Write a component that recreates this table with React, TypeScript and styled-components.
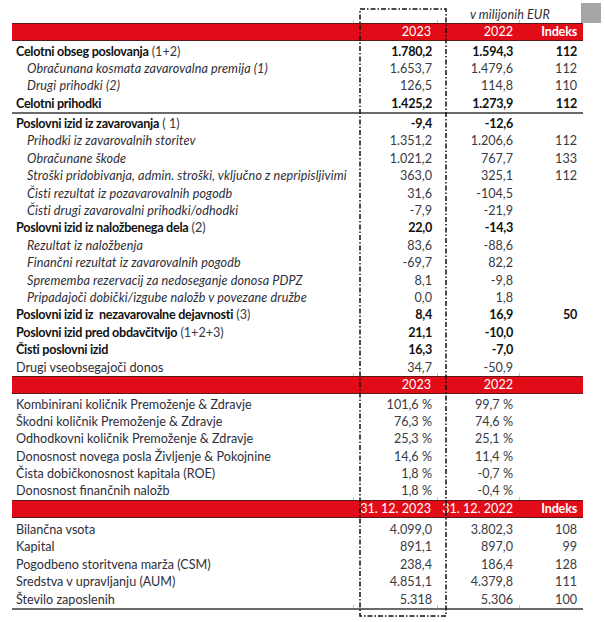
import React from "react";
import styled, { createGlobalStyle } from "styled-components";

const Global = createGlobalStyle`
  html, body { margin: 0; padding: 0; background: #ffffff; }
  body { font-family: Lato, "Noto Sans", sans-serif; }
`;

const RED = "#e20b18";
const COLS = "341px 84px 82px 64px";
const ROW_H = 17.4;

const Page = styled.div`
  position: relative;
  width: 605px;
  height: 622px;
  box-sizing: border-box;
  padding-left: 12px;
  overflow: hidden;
  font-size: 12.6px;
  color: #33333d;
`;

const Sheet = styled.div`
  width: 571px;
  display: flex;
  flex-direction: column;
`;

const UnitRow = styled.div`
  display: grid;
  grid-template-columns: ${COLS};
  height: 23px;
  box-sizing: border-box;
  padding-top: 6px;
  line-height: 17px;
`;

const UnitLabel = styled.div`
  grid-column: 3 / span 2;
  text-align: center;
  font-style: italic;
  letter-spacing: 0.1px;
  color: #2e2e38;
`;

const HeaderBar = styled.div`
  display: grid;
  grid-template-columns: ${COLS};
  height: 18px;
  box-sizing: border-box;
  background: ${RED};
  border-top: 1px solid #5a1a1a;
  border-bottom: 1px solid #5a1a1a;
  color: #ffffff;
  line-height: 16px;
`;

const HeadCell = styled.div<{ $bold?: boolean; $tick?: boolean }>`
  position: relative;
  text-align: right;
  padding-right: 6px;
  font-weight: ${(p) => (p.$bold ? 700 : 400)};
  letter-spacing: ${(p) => (p.$bold ? "-0.2px" : "0")};
  &::before {
    content: "";
    display: ${(p) => (p.$tick ? "block" : "none")};
    position: absolute;
    left: 0;
    top: -4px;
    width: 1px;
    height: 3px;
    background: #c4c4c4;
  }
`;

const Section = styled.div<{ $padTop: number; $padBottom?: number }>`
  display: flex;
  flex-direction: column;
  padding-top: ${(p) => p.$padTop}px;
  padding-bottom: ${(p) => p.$padBottom ?? 0}px;
`;

const Row = styled.div`
  display: grid;
  grid-template-columns: ${COLS};
  height: ${ROW_H}px;
  line-height: ${ROW_H}px;
  white-space: nowrap;
`;

const Rule = styled.div<{ $gapAfter?: number }>`
  height: 2px;
  background: #6a6a6a;
  margin-bottom: ${(p) => p.$gapAfter ?? 0}px;
`;

const BottomTicks = styled.div`
  display: grid;
  grid-template-columns: ${COLS};
  height: 0;
`;

const Tick = styled.div`
  position: relative;
  &::before {
    content: "";
    position: absolute;
    left: 0;
    top: -3px;
    width: 1px;
    height: 3px;
    background: #c4c4c4;
  }
`;

const Label = styled.div<{ $bold?: boolean; $italic?: boolean; $indent?: boolean }>`
  padding-left: ${(p) => (p.$indent ? 15 : 4)}px;
  font-weight: ${(p) => (p.$bold ? 700 : 400)};
  font-style: ${(p) => (p.$italic ? "italic" : "normal")};
  letter-spacing: ${(p) => (p.$bold ? "-0.28px" : p.$italic ? "0.11px" : "0")};
  color: ${(p) => (p.$bold ? "#111111" : "#2e2e38")};
`;

const Note = styled.span`
  font-weight: 400;
  letter-spacing: 0;
  color: #3a3a44;
`;

const Num = styled.div<{ $bold?: boolean; $pad?: number }>`
  text-align: right;
  padding-right: ${(p) => p.$pad ?? 6}px;
  font-weight: ${(p) => (p.$bold ? 700 : 400)};
  letter-spacing: ${(p) => (p.$bold ? "-0.25px" : "0")};
  color: ${(p) => (p.$bold ? "#111111" : "#3a3a44")};
`;

const Square = styled.div`
  position: absolute;
  left: 581px;
  top: 3px;
  width: 20px;
  height: 20px;
  background: #a6a6a6;
`;

const Frame = styled.svg`
  position: absolute;
  left: 359px;
  top: 8px;
  overflow: visible;
  pointer-events: none;
`;

type Line = {
  label: string;
  note?: string;
  bold?: boolean;
  italic?: boolean;
  indent?: boolean;
  a: string;
  b: string;
  i?: string;
};

const groupA: Line[] = [
  { label: "Celotni obseg poslovanja", note: " (1+2)", bold: true, a: "1.780,2", b: "1.594,3", i: "112" },
  { label: "Obračunana kosmata zavarovalna premija (1)", italic: true, indent: true, a: "1.653,7", b: "1.479,6", i: "112" },
  { label: "Drugi prihodki (2)", italic: true, indent: true, a: "126,5", b: "114,8", i: "110" },
  { label: "Celotni prihodki", bold: true, a: "1.425,2", b: "1.273,9", i: "112" },
];

const groupB: Line[] = [
  { label: "Poslovni izid iz zavarovanja", note: " ( 1)", bold: true, a: "-9,4", b: "-12,6" },
  { label: "Prihodki iz zavarovalnih storitev", italic: true, indent: true, a: "1.351,2", b: "1.206,6", i: "112" },
  { label: "Obračunane škode", italic: true, indent: true, a: "1.021,2", b: "767,7", i: "133" },
  { label: "Stroški pridobivanja, admin. stroški, vključno z nepripisljivimi", italic: true, indent: true, a: "363,0", b: "325,1", i: "112" },
  { label: "Čisti rezultat iz pozavarovalnih pogodb", italic: true, indent: true, a: "31,6", b: "-104,5" },
  { label: "Čisti drugi zavarovalni prihodki/odhodki", italic: true, indent: true, a: "-7,9", b: "-21,9" },
  { label: "Poslovni izid iz naložbenega dela", note: " (2)", bold: true, a: "22,0", b: "-14,3" },
  { label: "Rezultat iz naložbenja", italic: true, indent: true, a: "83,6", b: "-88,6" },
  { label: "Finančni rezultat iz zavarovalnih pogodb", italic: true, indent: true, a: "-69,7", b: "82,2" },
  { label: "Sprememba rezervacij za nedoseganje donosa PDPZ", italic: true, indent: true, a: "8,1", b: "-9,8" },
  { label: "Pripadajoči dobički/izgube naložb v povezane družbe", italic: true, indent: true, a: "0,0", b: "1,8" },
  { label: "Poslovni izid iz \u00a0nezavarovalne dejavnosti", note: " (3)", bold: true, a: "8,4", b: "16,9", i: "50" },
  { label: "Poslovni izid pred obdavčitvijo", note: " (1+2+3)", bold: true, a: "21,1", b: "-10,0" },
  { label: "Čisti poslovni izid", bold: true, a: "16,3", b: "-7,0" },
  { label: "Drugi vseobsegajoči donos", a: "34,7", b: "-50,9" },
];

const ratios: Line[] = [
  { label: "Kombinirani količnik Premoženje & Zdravje", a: "101,6 %", b: "99,7 %" },
  { label: "Škodni količnik Premoženje & Zdravje", a: "76,3 %", b: "74,6 %" },
  { label: "Odhodkovni količnik Premoženje & Zdravje", a: "25,3 %", b: "25,1 %" },
  { label: "Donosnost novega posla Življenje & Pokojnine", a: "14,6 %", b: "11,4 %" },
  { label: "Čista dobičkonosnost kapitala (ROE)", a: "1,8 %", b: "-0,7 %" },
  { label: "Donosnost finančnih naložb", a: "1,8 %", b: "-0,4 %" },
];

const balance: Line[] = [
  { label: "Bilančna vsota", a: "4.099,0", b: "3.802,3", i: "108" },
  { label: "Kapital", a: "891,1", b: "897,0", i: "99" },
  { label: "Pogodbeno storitvena marža (CSM)", a: "238,4", b: "186,4", i: "128" },
  { label: "Sredstva v upravljanju (AUM)", a: "4.851,1", b: "4.379,8", i: "111" },
  { label: "Število zaposlenih", a: "5.318", b: "5.306", i: "100" },
];

const DataRow: React.FC<{ d: Line }> = ({ d }) => (
  <Row>
    <Label $bold={d.bold} $italic={d.italic} $indent={d.indent}>
      {d.label}
      {d.note ? <Note>{d.note}</Note> : null}
    </Label>
    <Num $bold={d.bold} $pad={5}>{d.a}</Num>
    <Num $bold={d.bold}>{d.b}</Num>
    <Num $bold={d.bold}>{d.i ?? ""}</Num>
  </Row>
);

const Header: React.FC<{ a: string; b: string; i?: string }> = ({ a, b, i }) => (
  <HeaderBar>
    <HeadCell />
    <HeadCell $tick>{a}</HeadCell>
    <HeadCell $tick>{b}</HeadCell>
    <HeadCell $tick $bold>{i ?? ""}</HeadCell>
  </HeaderBar>
);

export default function App() {
  return (
    <>
      <Global />
      <Page>
        <Sheet>
          <UnitRow>
            <UnitLabel>v milijonih EUR</UnitLabel>
          </UnitRow>
          <Header a="2023" b="2022" i="Indeks" />
          <Section $padTop={1.5}>
            {groupA.map((d) => (
              <DataRow key={d.label} d={d} />
            ))}
          </Section>
          <Rule $gapAfter={1} />
          <Section $padTop={0}>
            {groupB.map((d) => (
              <DataRow key={d.label} d={d} />
            ))}
          </Section>
          <Header a="2023" b="2022" />
          <Section $padTop={1.6} $padBottom={0.5}>
            {ratios.map((d) => (
              <DataRow key={d.label} d={d} />
            ))}
          </Section>
          <Header a="31. 12. 2023" b="31. 12. 2022" i="Indeks" />
          <Section $padTop={2.6}>
            {balance.map((d) => (
              <DataRow key={d.label} d={d} />
            ))}
          </Section>
          <BottomTicks>
            <span />
            <Tick />
            <Tick />
            <Tick />
          </BottomTicks>
          <Rule />
        </Sheet>
        <Square />
        <Frame width="88" height="609" viewBox="0 0 88 609">
          <rect
            x="1"
            y="1"
            width="86"
            height="607"
            fill="none"
            stroke="#111"
            strokeWidth="1.5"
            strokeDasharray="5 2 1.5 2"
          />
        </Frame>
      </Page>
    </>
  );
}
